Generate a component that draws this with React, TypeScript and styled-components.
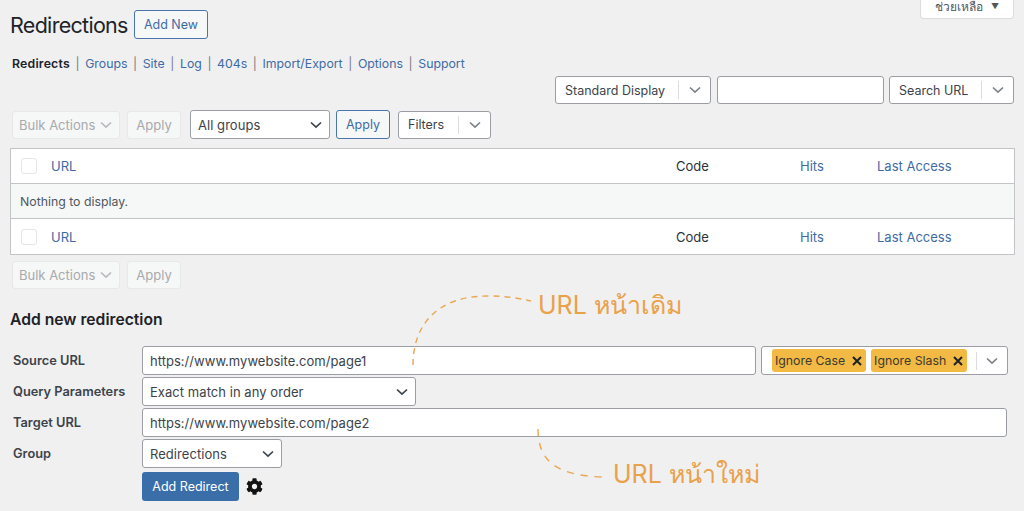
import { createGlobalStyle } from 'styled-components';
import styled from 'styled-components';
import { FaCog } from 'react-icons/fa';

const GlobalStyle = createGlobalStyle`
  html, body {
    margin: 0;
    background: #f0f0f1;
    color: #2c3338;
    font-family: Inter, 'Noto Sans', 'DejaVu Sans', sans-serif;
    font-size: 13px;
  }
  * {
    box-sizing: border-box;
  }
`;

const NAV_LINKS = ['Groups', 'Site', 'Log', '404s', 'Import/Export', 'Options', 'Support'];

const Chevron = ({ color = '#50575e' }: { color?: string }) => (
  <svg width="12" height="8" viewBox="0 0 12 8" fill="none">
    <path d="M1 1.5 L6 6.2 L11 1.5" stroke={color} strokeWidth="1.7" />
  </svg>
);

const Cross = () => (
  <svg width="10" height="10" viewBox="0 0 10 10" fill="none">
    <path d="M1 1 L9 9 M9 1 L1 9" stroke="#1d2327" strokeWidth="2" />
  </svg>
);

const SplitSelect = ({ label, width }: { label: string; width: number }) => (
  <SplitBox $width={width}>
    <SplitLabel>{label}</SplitLabel>
    <SplitDivider />
    <SplitArrow>
      <Chevron color="#7d8389" />
    </SplitArrow>
  </SplitBox>
);

const BulkActions = () => (
  <BulkRow>
    <DisabledSelect>
      Bulk Actions
      <Chevron color="#b8bbbe" />
    </DisabledSelect>
    <DisabledButton>Apply</DisabledButton>
  </BulkRow>
);

const TableHead = ({ $bottom }: { $bottom?: boolean }) => (
  <HeadRow $bottom={$bottom}>
    <CheckBox />
    <HeadLink>URL</HeadLink>
    <HeadText>Code</HeadText>
    <HeadLink>Hits</HeadLink>
    <HeadLink>Last Access</HeadLink>
  </HeadRow>
);

export default function App() {
  return (
    <Page>
      <GlobalStyle />
      <HelpTab>
        ช่วยเหลือ <HelpArrow>▼</HelpArrow>
      </HelpTab>

      <TitleRow>
        <Title>Redirections</Title>
        <OutlineButton $width={74} $height={29}>
          Add New
        </OutlineButton>
      </TitleRow>

      <SubNav>
        <strong>Redirects</strong>
        {NAV_LINKS.map(link => (
          <NavItem key={link}>
            <NavBar>|</NavBar>
            <NavLink>{link}</NavLink>
          </NavItem>
        ))}
      </SubNav>

      <SearchRow>
        <SplitSelect label="Standard Display" width={156} />
        <SearchInput />
        <SplitSelect label="Search URL" width={125} />
      </SearchRow>

      <ToolRow>
        <BulkActions />
        <GroupSelect $width={140} $height={29}>
          All groups
          <Chevron color="#3c434a" />
        </GroupSelect>
        <ApplyButton $width={54} $height={29}>
          Apply
        </ApplyButton>
        <FilterSlot>
          <SplitSelect label="Filters" width={93} />
        </FilterSlot>
      </ToolRow>

      <Table>
        <TableHead />
        <EmptyRow>Nothing to display.</EmptyRow>
        <TableHead $bottom />
      </Table>

      <BottomTools>
        <BulkActions />
      </BottomTools>

      <FormTitle>Add new redirection</FormTitle>

      <Form>
        <FieldLabel>Source URL</FieldLabel>
        <SourceLine>
          <TextField $grow>https://www.mywebsite.com/page1</TextField>
          <Flags>
            <Tag>
              Ignore Case <Cross />
            </Tag>
            <Tag>
              Ignore Slash <Cross />
            </Tag>
            <FlagsDivider />
            <FlagsArrow>
              <Chevron color="#7d8389" />
            </FlagsArrow>
          </Flags>
        </SourceLine>

        <FieldLabel>Query Parameters</FieldLabel>
        <GroupSelect $width={274} $height={29}>
          Exact match in any order
          <Chevron color="#3c434a" />
        </GroupSelect>

        <FieldLabel>Target URL</FieldLabel>
        <TargetLine>
          <TextField $grow>https://www.mywebsite.com/page2</TextField>
        </TargetLine>

        <FieldLabel>Group</FieldLabel>
        <GroupSelect $width={140} $height={29}>
          Redirections
          <Chevron color="#3c434a" />
        </GroupSelect>

        <span />
        <SubmitLine>
          <PrimaryButton>Add Redirect</PrimaryButton>
          <FaCog size={17} color="#111" />
        </SubmitLine>
      </Form>

      <Annotations width="1024" height="511" viewBox="0 0 1024 511" fill="none">
        <path
          d="M413 365 C413 330 432 296 488 296 C505 296 518 298 531 301"
          stroke="#e9a752"
          strokeWidth="1.4"
          strokeDasharray="6 5"
        />
        <path
          d="M538 429 C538 460 555 476 604 477"
          stroke="#e9a752"
          strokeWidth="1.4"
          strokeDasharray="7 7"
        />
      </Annotations>
      <OldUrlNote>URL หน้าเดิม</OldUrlNote>
      <NewUrlNote>URL หน้าใหม่</NewUrlNote>
    </Page>
  );
}

const Page = styled.div`
  position: relative;
  width: 1024px;
  height: 511px;
  overflow: hidden;
  padding: 10px 9px 0 10px;
`;

const HelpTab = styled.div`
  position: absolute;
  top: -1px;
  right: 10px;
  width: 94px;
  height: 20px;
  background: #fff;
  border: 1px solid #dcdcde;
  border-top: none;
  border-radius: 0 0 4px 4px;
  font-size: 12px;
  color: #50575e;
  display: flex;
  align-items: center;
  justify-content: center;
  gap: 8px;
  padding-bottom: 5px;
`;

const HelpArrow = styled.span`
  font-size: 8px;
`;

const TitleRow = styled.div`
  display: flex;
  align-items: center;
  gap: 5px;
  height: 29px;
`;

const Title = styled.h1`
  margin: 0;
  font-size: 21.5px;
  font-weight: 400;
  letter-spacing: -0.7px;
  color: #1d2327;
  width: 119px;
  white-space: nowrap;
`;

const OutlineButton = styled.div<{ $width: number; $height: number }>`
  width: ${p => p.$width}px;
  height: ${p => p.$height}px;
  flex: none;
  display: flex;
  align-items: center;
  justify-content: center;
  background: #f6f7f7;
  border: 1px solid #4a74ab;
  border-radius: 3px;
  color: #3f6ba5;
  font-size: 12.5px;
`;

const ApplyButton = styled(OutlineButton)`
  margin-left: -1px;
`;

const SubNav = styled.div`
  display: flex;
  align-items: center;
  height: 16px;
  margin: 16px 0 0 2px;
  font-size: 12.3px;

  strong {
    font-weight: 600;
    letter-spacing: 0.2px;
    color: #1d2327;
  }
`;

const NavItem = styled.span`
  display: flex;
  align-items: center;
`;

const NavBar = styled.span`
  color: #787c82;
  margin: 0 5.6px;
`;

const NavLink = styled.span`
  color: #3f6ba5;
`;

const SearchRow = styled.div`
  display: flex;
  justify-content: flex-end;
  gap: 6px;
  height: 28px;
  margin: 5px 1px 0 0;
`;

const SplitBox = styled.div<{ $width: number }>`
  width: ${p => p.$width}px;
  height: 28px;
  display: flex;
  align-items: center;
  background: #fff;
  border: 1px solid #9a9ea3;
  border-radius: 3px;
  flex: none;
`;

const SplitLabel = styled.span`
  flex: 1;
  padding-left: 9px;
  font-size: 12.5px;
  color: #3c434a;
  white-space: nowrap;
`;

const SplitDivider = styled.span`
  width: 1px;
  height: 18px;
  background: #dcdcde;
`;

const SplitArrow = styled.span`
  width: 31px;
  display: flex;
  justify-content: center;
`;

const SearchInput = styled.div`
  width: 167px;
  height: 28px;
  background: #fff;
  border: 1px solid #9a9ea3;
  border-radius: 3px;
  margin-right: -1px;
`;

const ToolRow = styled.div`
  display: flex;
  align-items: center;
  height: 29px;
  margin-top: 6px;
  padding-left: 2px;
  gap: 7px;
`;

const BulkRow = styled.div`
  display: flex;
  gap: 7px;
  margin-right: 2px;
`;

const DisabledSelect = styled.div`
  width: 108px;
  height: 28px;
  display: flex;
  align-items: center;
  justify-content: space-between;
  padding: 0 7px 0 6px;
  background: #f6f7f7;
  border: 1px solid #e7e8e9;
  border-radius: 3px;
  color: #a7aaad;
  font-size: 13px;
`;

const DisabledButton = styled.div`
  width: 54px;
  height: 28px;
  display: flex;
  align-items: center;
  justify-content: center;
  background: #f6f7f7;
  border: 1px solid #e7e8e9;
  border-radius: 3px;
  color: #a7aaad;
  font-size: 13px;
`;

const GroupSelect = styled.div<{ $width: number; $height: number }>`
  width: ${p => p.$width}px;
  height: ${p => p.$height}px;
  display: flex;
  align-items: center;
  justify-content: space-between;
  padding: 0 7px 0 7px;
  background: #fff;
  border: 1px solid #9a9ea3;
  border-radius: 3px;
  color: #3c434a;
  font-size: 13px;
  letter-spacing: 0.05px;
`;

const FilterSlot = styled.div`
  margin-left: 1px;
`;

const Table = styled.div`
  margin-top: 9px;
  width: 1005px;
  height: 107px;
  background: #fff;
  border: 1px solid #c3c4c7;
  display: flex;
  flex-direction: column;
`;

const HeadRow = styled.div<{ $bottom?: boolean }>`
  height: ${p => (p.$bottom ? 35 : 34)}px;
  display: grid;
  grid-template-columns: 30px 625px 124px 77px 1fr;
  align-items: center;
  padding-left: 10px;
`;

const CheckBox = styled.span`
  width: 16px;
  height: 16px;
  background: #fff;
  border: 1px solid #e4e5e6;
  border-radius: 3px;
`;

const HeadLink = styled.span`
  color: #3f6ba5;
  font-size: 13px;
`;

const HeadText = styled.span`
  color: #2c3338;
  font-size: 13px;
`;

const EmptyRow = styled.div`
  height: 36px;
  display: flex;
  align-items: center;
  padding-left: 9px;
  background: #f6f7f7;
  border-top: 1px solid #c3c4c7;
  border-bottom: 1px solid #c3c4c7;
  color: #50575e;
  font-size: 12.3px;
`;

const BottomTools = styled.div`
  margin-top: 6px;
  padding-left: 2px;
  height: 28px;
`;

const FormTitle = styled.h2`
  margin: 22px 0 0;
  height: 18px;
  line-height: 18px;
  font-size: 15.7px;
  font-weight: 600;
  color: #1d2327;
`;

const Form = styled.div`
  margin-top: 17px;
  display: grid;
  grid-template-columns: 132px 1fr;
  row-gap: 2px;
  align-items: center;
`;

const FieldLabel = styled.div`
  padding-left: 3px;
  font-size: 12.8px;
  font-weight: 600;
  color: #3c434a;
  white-space: nowrap;
`;

const SourceLine = styled.div`
  display: flex;
  gap: 5px;
  padding-right: 7px;
`;

const TargetLine = styled.div`
  display: flex;
  padding-right: 8px;
`;

const TextField = styled.div<{ $grow?: boolean }>`
  flex: ${p => (p.$grow ? 1 : 'none')};
  height: 29px;
  display: flex;
  align-items: center;
  padding-left: 7px;
  background: #fff;
  border: 1px solid #9a9ea3;
  border-radius: 3px;
  color: #3c434a;
  font-size: 13px;
  letter-spacing: 0.03px;
`;

const Flags = styled.div`
  width: 247px;
  height: 29px;
  flex: none;
  display: flex;
  align-items: center;
  gap: 5px;
  padding-left: 10px;
  background: #fff;
  border: 1px solid #9a9ea3;
  border-radius: 3px;
`;

const Tag = styled.span`
  height: 23px;
  display: flex;
  align-items: center;
  gap: 7px;
  padding: 0 4px 0 3px;
  background: #f2b944;
  border-radius: 3px;
  color: #3c3a30;
  font-size: 12.3px;
  white-space: nowrap;
`;

const FlagsDivider = styled.span`
  width: 1px;
  height: 18px;
  margin-left: 4px;
  background: #dcdcde;
`;

const FlagsArrow = styled.span`
  flex: 1;
  display: flex;
  justify-content: center;
  margin-left: -5px;
`;

const SubmitLine = styled.div`
  display: flex;
  align-items: center;
  gap: 7px;
  margin-top: 2px;
`;

const PrimaryButton = styled.div`
  width: 97px;
  height: 29px;
  display: flex;
  align-items: center;
  justify-content: center;
  background: #3a6ea9;
  border-radius: 3px;
  color: #fff;
  font-size: 12.5px;
`;

const Annotations = styled.svg`
  position: absolute;
  left: 0;
  top: 0;
  pointer-events: none;
`;

const Note = styled.div`
  position: absolute;
  color: #e9a14a;
  font-size: 25px;
  line-height: 30px;
  white-space: nowrap;
`;

const OldUrlNote = styled(Note)`
  left: 538px;
  top: 290px;
`;

const NewUrlNote = styled(Note)`
  left: 613px;
  top: 459px;
`;
